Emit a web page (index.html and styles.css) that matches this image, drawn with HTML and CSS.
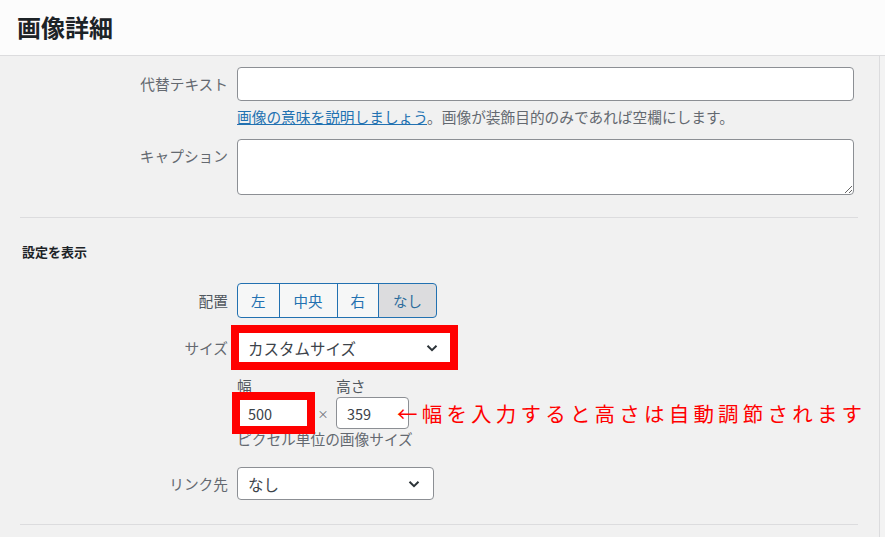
FILE: index.html
```html
<!DOCTYPE html>
<html lang="ja">
<head>
  <meta charset="UTF-8" />
  <meta name="viewport" content="width=device-width, initial-scale=1.0">
  <title>画像詳細</title>
  <link rel="stylesheet" href="styles.css">
</head>
<body>

  <header class="modal-head">
    <h1>画像詳細</h1>
  </header>

  <div class="modal-body">
    <main class="details">

      <div class="setting">
        <label class="name" for="alt-text">代替テキスト</label>
        <div class="field">
          <input type="text" id="alt-text" class="text-input" />
          <p class="description"><a href="#">画像の意味を説明しましょう</a>。画像が装飾目的のみであれば空欄にします。</p>
        </div>
      </div>

      <div class="setting caption">
        <label class="name" for="caption">キャプション</label>
        <textarea id="caption"></textarea>
      </div>

      <hr class="divider" />

      <h2>設定を表示</h2>

      <div class="setting align">
        <span class="name">配置</span>
        <div class="button-group">
          <button type="button">左</button>
          <button type="button">中央</button>
          <button type="button">右</button>
          <button type="button" class="active">なし</button>
        </div>
      </div>

      <div class="setting size">
        <span class="name">サイズ</span>
        <div class="mark">
          <div class="select size-select">
            <span>カスタムサイズ</span>
            <svg width="14" height="14" viewBox="0 0 14 14"><path d="M2.5 4.8 L7 9.2 L11.5 4.8" fill="none" stroke="#2c3338" stroke-width="2"/></svg>
          </div>
        </div>
      </div>

      <div class="setting dims">
        <span class="name"></span>
        <div class="field">
          <div class="dims-grid">
            <span class="dim-label">幅</span>
            <span></span>
            <span class="dim-label">高さ</span>
            <span class="mark num-mark"><input type="text" class="num-input" value="500" /></span>
            <span class="times">×</span>
            <input type="text" class="num-input" value="359" />
            <span class="note">←幅を入力すると高さは自動調節されます</span>
          </div>
          <p class="description">ピクセル単位の画像サイズ</p>
        </div>
      </div>

      <div class="setting link">
        <span class="name">リンク先</span>
        <div class="select link-select">
          <span>なし</span>
          <svg width="14" height="14" viewBox="0 0 14 14"><path d="M2.5 4.8 L7 9.2 L11.5 4.8" fill="none" stroke="#2c3338" stroke-width="2"/></svg>
        </div>
      </div>

      <hr class="divider bottom" />
    </main>
    <aside class="sidebar"></aside>
  </div>

</body>
</html>
```

FILE: styles.css
```css
  body {
    margin: 0;
    font-family: "Noto Sans CJK JP", "Noto Sans", sans-serif;
    font-size: 14.7px;
    color: #646970;
    background: #f1f1f1;
    overflow: hidden;
  }

  .modal-head {
    height: 55px;
    background: #fcfcfc;
    border-bottom: 1px solid #dcdcde;
  }

  .modal-head h1 {
    margin: 0;
    padding-left: 17px;
    font-size: 24px;
    line-height: 54px;
    font-weight: 700;
    color: #1d2327;
  }

  .modal-body {
    display: flex;
    height: 481px;
  }

  .details {
    width: 880px;
    padding-top: 11px;
    border-right: 1px solid #dcdcde;
    box-sizing: border-box;
  }

  .sidebar {
    flex: 1;
    background: #f3f3f3;
  }

  .setting {
    display: grid;
    grid-template-columns: 228px 617px;
    column-gap: 9px;
    align-items: start;
  }

  .setting .name {
    text-align: right;
    line-height: 34px;
  }

  .text-input {
    display: block;
    width: 617px;
    height: 34px;
    box-sizing: border-box;
    border: 1px solid #8c8f94;
    border-radius: 4px;
    background: #fff;
  }

  .description {
    margin: 6px 0 0;
    line-height: 20px;
  }

  .description a {
    color: #2271b1;
  }

  .caption {
    margin-top: 12px;
  }

  .caption textarea {
    display: block;
    width: 617px;
    height: 56px;
    box-sizing: border-box;
    border: 1px solid #8c8f94;
    border-radius: 4px;
    background: #fff;
  }

  .divider {
    margin: 22px 0 0 20px;
    width: 838px;
    border: 0;
    border-top: 1px solid #dcdcde;
  }

  .divider.bottom {
    margin-top: 24px;
  }

  h2 {
    margin: 24px 0 0;
    padding-left: 22px;
    font-size: 13px;
    line-height: 20px;
    font-weight: 700;
    color: #1d2327;
  }

  .align {
    margin-top: 21px;
  }

  .align .name {
    line-height: 35px;
    color: #50575e;
  }

  .button-group {
    display: flex;
  }

  .button-group button {
    height: 35px;
    padding: 0 13px;
    margin-left: -1px;
    font-family: inherit;
    font-size: 14.5px;
    color: #2271b1;
    background: #f6f7f7;
    border: 1px solid #2271b1;
  }

  .button-group button:first-child {
    margin-left: 0;
    border-radius: 4px 0 0 4px;
  }

  .button-group button:nth-child(2) {
    padding: 0 14px;
  }

  .button-group button:last-child {
    border-radius: 0 4px 4px 0;
    background: #dcdcde;
    padding: 0 14px;
    color: #2c6c9c;
  }

  .size {
    margin-top: 13px;
  }

  .select {
    display: flex;
    align-items: center;
    justify-content: space-between;
    height: 33px;
    box-sizing: border-box;
    padding: 0 12px 0 10px;
    border: 1px solid #8c8f94;
    border-radius: 4px;
    background: #fff;
    font-size: 15.5px;
    color: #3c434a;
  }

  .size-select {
    width: 215px;
  }

  .link-select {
    width: 197px;
  }

  /* red annotation boxes, square corners */
  .mark {
    display: block;
    width: fit-content;
    outline: 8px solid #ff0000;
    outline-offset: -2px;
  }

  .dims {
    margin-top: 11px;
  }

  .dims-grid {
    position: relative;
    display: grid;
    grid-template-columns: 73px 26px 73px;
    grid-template-rows: 20px 33px;
  }

  .dim-label {
    line-height: 20px;
    color: #50575e;
  }

  .num-input {
    display: block;
    margin-top: 1px;
    width: 73px;
    height: 32px;
    box-sizing: border-box;
    padding: 0 10px;
    border: 1px solid #8c8f94;
    border-radius: 4px;
    background: #fff;
    font-family: inherit;
    font-size: 14.5px;
    color: #3c434a;
  }

  .num-mark {
    margin-top: 1px;
    height: 32px;
    outline-offset: -3px;
  }

  .num-mark .num-input {
    margin-top: 0;
  }

  .times {
    font-size: 11px;
    text-align: center;
    line-height: 36px;
  }

  .note {
    position: absolute;
    left: 160px;
    top: 23px;
    white-space: nowrap;
    font-size: 20.5px;
    line-height: 28px;
    letter-spacing: 4.2px;
    color: #ff0000;
  }

  .dims .description {
    margin-top: 0;
  }

  .link {
    margin-top: 18px;
  }

  .link .name {
    line-height: 33px;
  }
```
